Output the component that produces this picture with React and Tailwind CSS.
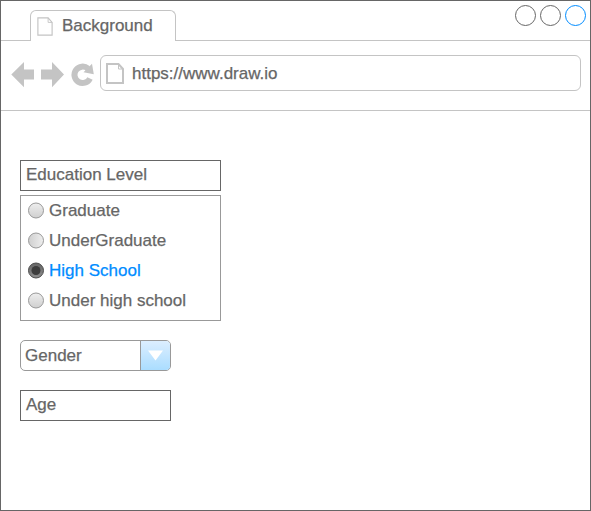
import React from "react";

function PageIcon({ className, stroke }) {
  return (
    <svg className={className} viewBox="0 0 18 21" fill="none" stroke="#c4c4c4" strokeWidth={stroke} preserveAspectRatio="none">
      <path d="M1 1H12.500L17 6V20H1Z" />
      <path d="M12.500 1V6H17" strokeWidth="1" />
    </svg>
  );
}

function Toolbar() {
  return (
    <svg className="mt-[7px] h-[26px] w-[84px] shrink-0" viewBox="0 0 84 26" fill="#c4c4c4">
      <path d="M0.300 12.600L13 0V7.600H23V17.400H13V25.200Z" />
      <path d="M53 12.600L41 0V7.600H30V17.400H41V25.200Z" />
      <path
        d="M79 16.500A8.200 8.200 0 1 1 77 6.600"
        fill="none"
        stroke="#c4c4c4"
        strokeWidth="6"
      />
      <path d="M81 1.800L82.800 12.300L72.500 10.300Z" />
    </svg>
  );
}

function Radio({ label, selected, sideways }) {
  return (
    <div className="flex h-[30px] items-start pt-[5px]">
      <svg className="mt-px h-[17px] w-4 shrink-0" viewBox="0 0 16 17">
        <defs>
          <linearGradient id="radioDown" x1="0" y1="0" x2="0" y2="1">
            <stop offset="0" stopColor="#eeeeee" />
            <stop offset="1" stopColor="#cfcfcf" />
          </linearGradient>
          <linearGradient id="radioSide" x1="1" y1="0" x2="0" y2="0">
            <stop offset="0" stopColor="#eeeeee" />
            <stop offset="1" stopColor="#cfcfcf" />
          </linearGradient>
          <linearGradient id="radioOn" x1="0" y1="0" x2="0" y2="1">
            <stop offset="0" stopColor="#666666" />
            <stop offset="1" stopColor="#8c8c8c" />
          </linearGradient>
        </defs>
        <circle
          cx="8"
          cy="8.500"
          r="7.500"
          fill={selected ? "url(#radioOn)" : sideways ? "url(#radioSide)" : "url(#radioDown)"}
          stroke={selected ? "#4c4c4c" : "#999999"}
        />
        {selected && <circle cx="8" cy="8.500" r="4.500" fill="#3c3c3c" />}
      </svg>
      <span className={selected ? "ml-[5px] text-[#008cff]" : "ml-[5px]"}>{label}</span>
    </div>
  );
}

export default function App() {
  return (
    <div className="flex h-[511px] w-[591px] flex-col border border-[#666666] bg-white font-['Liberation_Sans',Arial,sans-serif] text-[17px] leading-5 text-[#666666] [-webkit-text-stroke:0.25px]">
      <header className="flex h-10 shrink-0">
        <div className="w-[29px] border-b border-[#c4c4c4]" />
        <div className="mt-[9px] flex w-[146px] rounded-t-[6px] border border-b-0 border-[#c4c4c4] pl-[6px]">
          <PageIcon className="mt-[6px] h-[19px] w-4" stroke={1.3} />
          <span className="ml-[9px] mt-[5px]">Background</span>
        </div>
        <div className="flex flex-1 justify-end gap-1 border-b border-[#c4c4c4] pr-1 pt-1">
          <div className="h-[21px] w-[21px] rounded-full border border-[#666666]" />
          <div className="h-[21px] w-[21px] rounded-full border border-[#666666]" />
          <div className="h-[21px] w-[21px] rounded-full border border-[#008cff]" />
        </div>
      </header>
      <nav className="flex h-[70px] shrink-0 border-b border-[#c4c4c4] pl-[10px] pt-[14px]">
        <Toolbar />
        <div className="ml-[5px] flex h-9 w-[481px] rounded-[6px] border border-[#c4c4c4] pl-[5px]">
          <PageIcon className="mt-[7px] h-[21px] w-[18px]" stroke={2} />
          <span className="ml-2 mt-2">https://www.draw.io</span>
        </div>
      </nav>
      <main className="pl-[19px] pt-[49px]">
        <div className="h-[31px] w-[201px] border border-[#666666] pl-[5px] pt-1">Education Level</div>
        <div className="mt-1 h-[126px] w-[201px] border border-[#999999] pl-[7px]">
          <Radio label="Graduate" />
          <Radio label="UnderGraduate" sideways />
          <Radio label="High School" selected />
          <Radio label="Under high school" />
        </div>
        <div className="mt-[19px] flex h-[31px] w-[151px] overflow-hidden rounded-[5px] border border-[#999999]">
          <span className="flex-1 pl-1 pt-[5px]">Gender</span>
          <div className="flex w-[30px] justify-center border-l border-[#999999] bg-linear-to-b from-[#dceeff] to-[#aaddff] pt-[9px]">
            <svg className="h-[11px] w-[15px]" viewBox="0 0 15 11" fill="#ffffff">
              <path d="M0 0.500H15L7.500 10.500Z" />
            </svg>
          </div>
        </div>
        <div className="mt-[19px] h-[31px] w-[151px] border border-[#666666] pl-[5px] pt-1">Age</div>
      </main>
    </div>
  );
}
